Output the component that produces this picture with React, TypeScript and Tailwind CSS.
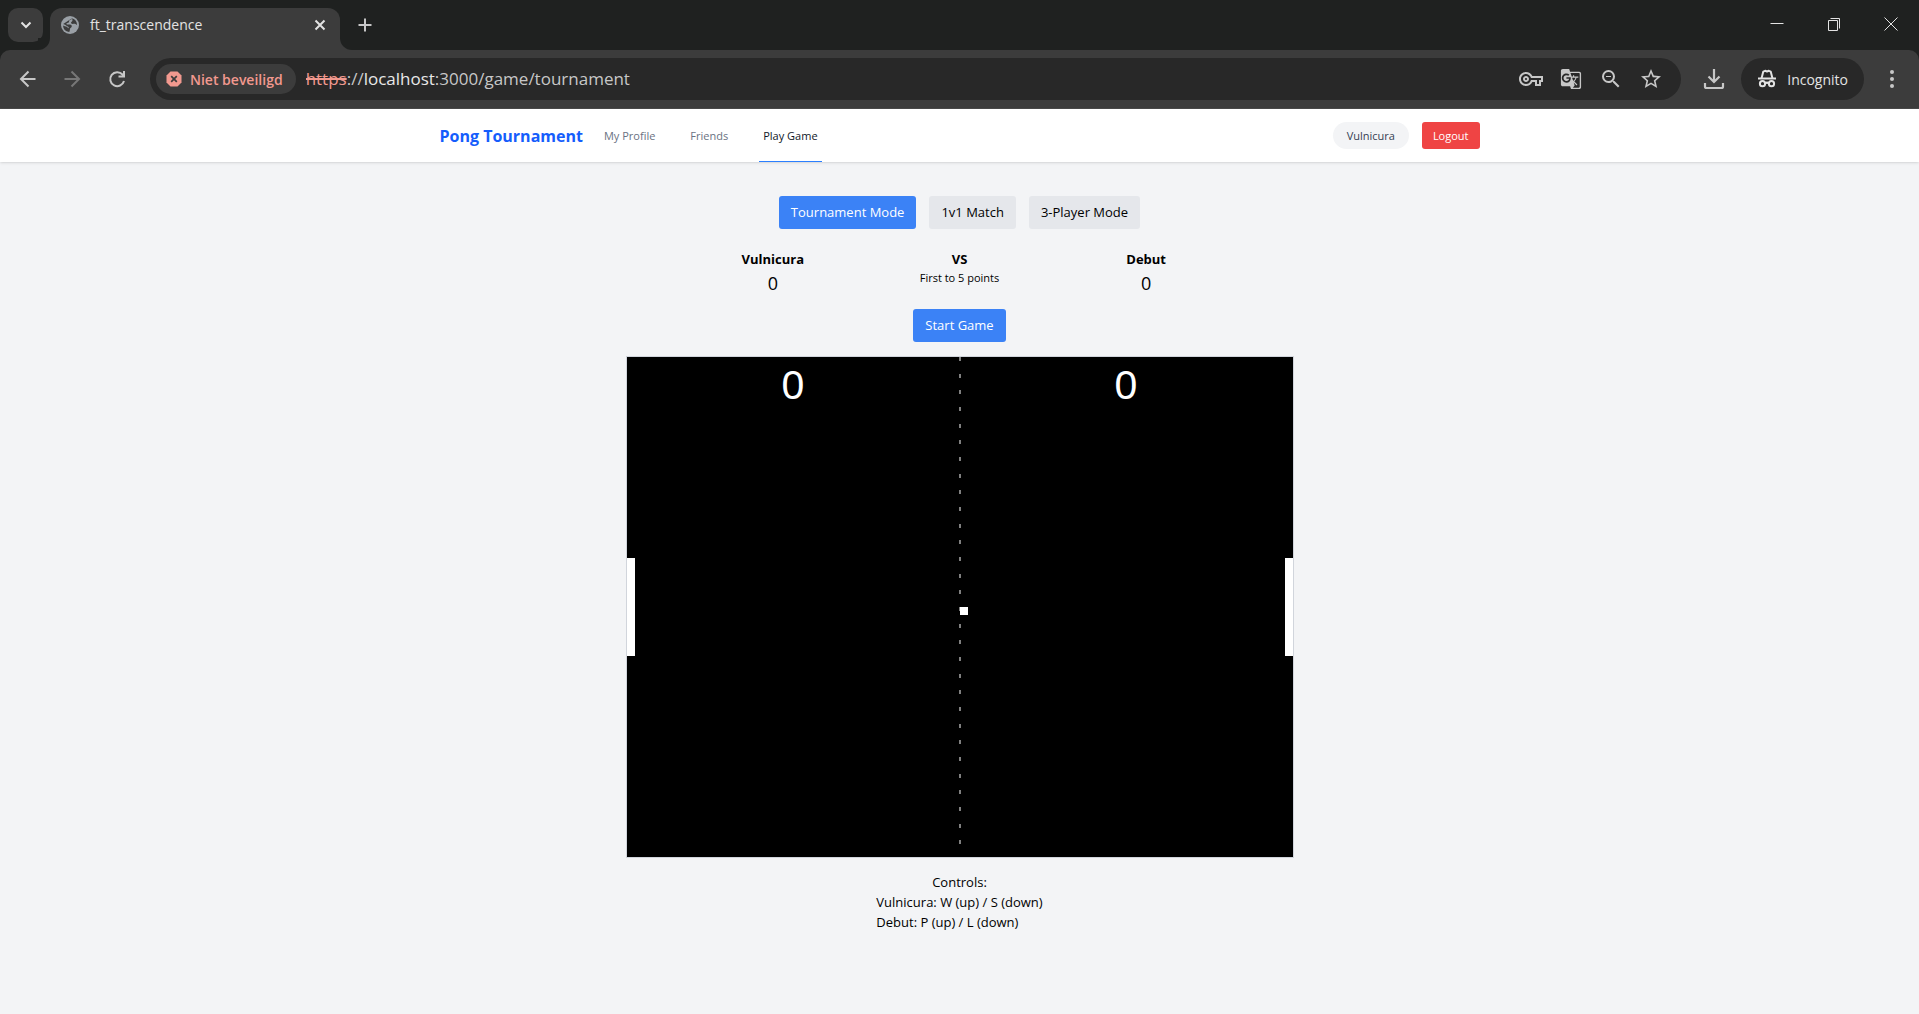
import type { ReactNode } from "react";
import { MdGTranslate, MdOutlineVpnKey, MdOutlineZoomOut, MdStarOutline } from "react-icons/md";

function Stroke({ d, size = 20, width = 2, className = "" }: { d: string; size?: number; width?: number; className?: string }) {
  return (
    <svg width={size} height={size} viewBox="0 0 20 20" fill="none" stroke="currentColor" strokeWidth={width} className={className} aria-hidden="true">
      <path d={d} />
    </svg>
  );
}

function IconButton({ label, className, children }: { label: string; className: string; children: ReactNode }) {
  return (
    <button type="button" aria-label={label} className={`flex shrink-0 items-center justify-center ${className}`}>
      {children}
    </button>
  );
}

function GlobeIcon() {
  return (
    <svg width="20" height="20" viewBox="0 0 20 20" className="mt-2 text-[#9aa0a6]" aria-hidden="true">
      <circle cx="10" cy="10" r="9" fill="currentColor" />
      <path
        d="M12 3.200c-.3 1.600-1.800 1.300-2.600 2.100-.6.700.1 1.500-.7 2.100-.8.600-2 .2-2.300 1.100-.2.900 1 1.100 2.200 1.100 1.700 0 3.200.2 3.200 1.700s-1.600 1.300-1.800 2.600c-.2 1.200-.2 2.200-.9 3.100A7 7 0 0 1 3 10.500c1.200.7 2.600.9 3.800 1.300.8.300.7 1.300 1.600 1.400l.4-.8c-.4-1-2.400-1.100-3-2.100-.6-1-2-.7-2.600-1.400"
        fill="#3c3c3c"
      />
      <path d="M12 3.200A7 7 0 0 1 17 10c-.9-.3-1.100-1.200-2.200-1.200-1.300 0-2.400.6-3.400-.2-.8-.7-.3-1.500.5-2.100.9-.7.600-1.800.1-3.300z" fill="#3c3c3c" />
    </svg>
  );
}

function IncognitoIcon() {
  return (
    <svg width="20" height="20" viewBox="0 0 20 20" fill="none" stroke="currentColor" strokeWidth="2" aria-hidden="true">
      <path d="M1 9.500h18" />
      <path d="M4.500 9.500 6.300 2.600l1.800-.8 1.900.7 1.900-.7 1.800.8 1.800 6.900" strokeLinejoin="round" />
      <circle cx="5.500" cy="14.700" r="2.600" />
      <circle cx="14.500" cy="14.700" r="2.600" />
      <path d="M8 14.300c1.200-.8 2.800-.8 4 0" />
    </svg>
  );
}

function TabStrip() {
  return (
    <div className="flex h-[50px] items-start bg-[#1f2120] text-[#e3e3e3]">
      <IconButton label="Search tabs" className="mt-2 ml-2 h-[34px] w-[35px] rounded-[10px] bg-[#3c3c3c]">
        <Stroke d="m5.500 7.500 4.500 4.500 4.500-4.500" />
      </IconButton>
      <div className="relative mt-2 ml-[7px] flex h-[42px] w-[290px] items-center rounded-t-[12px] bg-[#3c3c3c] pr-2 pb-4 pl-[10px]">
        <span className="absolute bottom-0 -left-3 size-3 bg-[#3c3c3c]">
          <span className="block size-3 rounded-br-[12px] bg-[#1f2120]" />
        </span>
        <span className="absolute -right-3 bottom-0 size-3 bg-[#3c3c3c]">
          <span className="block size-3 rounded-bl-[12px] bg-[#1f2120]" />
        </span>
        <GlobeIcon />
        <span className="mt-2 ml-[10px] flex-1 text-[14px] leading-5">ft_transcendence</span>
        <IconButton label="Close tab" className="mt-2 size-6">
          <Stroke d="m5.500 5.500 9 9m0-9-9 9" />
        </IconButton>
      </div>
      <IconButton label="New tab" className="mt-[13px] ml-[13px] size-6 text-[#c7c7c7]">
        <Stroke d="M10 3.500v13M3.500 10h13" />
      </IconButton>
      <div className="ml-auto flex pt-2">
        <IconButton label="Minimize" className="h-8 w-[57px]">
          <Stroke d="M3.500 9.500h13" width={1} />
        </IconButton>
        <IconButton label="Restore" className="h-8 w-[57px]">
          <Stroke d="M4.500 6.500h9v10h-9zM6.500 4.500h9v10" width={1} />
        </IconButton>
        <IconButton label="Close" className="h-8 w-[57px]">
          <Stroke d="m3.500 3.500 13 13m0-13-13 13" width={1} />
        </IconButton>
      </div>
    </div>
  );
}

function Toolbar() {
  return (
    <div className="bg-[#1f2120]">
      <div className="flex h-[59px] items-center rounded-t-[10px] border-b border-[#4a4a4a] bg-[#3c3c3c] text-[#c7c7c7]">
        <IconButton label="Back" className="ml-2 h-9 w-10">
          <Stroke d="M17.500 10H3m7.500-7.500L3 10l7.500 7.500" />
        </IconButton>
        <IconButton label="Forward" className="ml-1 h-9 w-10 text-[#777777]">
          <Stroke d="M2.500 10H17M9.500 2.500 17 10l-7.500 7.500" />
        </IconButton>
        <IconButton label="Reload" className="ml-[5px] h-9 w-10">
          <Stroke d="M17 12a7 7 0 1 1-1.500-6.500L17 7m0-5v5.500h-5.500" />
        </IconButton>
        <div className="ml-[13px] flex h-[42px] min-w-0 flex-1 items-center rounded-full bg-[#282828] pr-[18px] pl-[6px]">
          <button type="button" className="flex h-[30px] shrink-0 items-center gap-2 rounded-full bg-[#3c3c3c] pr-[13px] pl-[10px] text-[14px] font-semibold text-[#f2998f]">
            <svg width="16" height="16" viewBox="0 0 16 16" aria-hidden="true">
              <path d="M4.500.5h7l4 4v7l-4 4h-7l-4-4v-7z" fill="currentColor" />
              <path d="m5.200 5.200 5.600 5.600m0-5.600-5.600 5.600" stroke="#3c3c3c" strokeWidth="1.700" />
            </svg>
            Niet beveiligd
          </button>
          <div role="textbox" aria-label="Address" tabIndex={0} className="ml-[10px] min-w-0 flex-1 truncate text-[17px] leading-6">
            <span className="text-[#f2998f] line-through decoration-2">https</span>
            <span>://</span>
            <span className="text-[#e8e8e8]">localhost</span>
            <span>:3000/game/tournament</span>
          </div>
          <div className="flex gap-4">
            <IconButton label="Passwords" className="size-6">
              <MdOutlineVpnKey className="size-6" />
            </IconButton>
            <IconButton label="Translate" className="size-6">
              <MdGTranslate className="size-[22px]" />
            </IconButton>
            <IconButton label="Zoom" className="size-6">
              <MdOutlineZoomOut className="size-6" />
            </IconButton>
            <IconButton label="Bookmark" className="size-6">
              <MdStarOutline className="size-6" />
            </IconButton>
          </div>
        </div>
        <IconButton label="Downloads" className="ml-[21px] size-6">
          <svg width="22" height="22" viewBox="0 0 22 22" fill="none" stroke="currentColor" strokeWidth="2.200" aria-hidden="true">
            <path d="M11 1v13M5.500 8.500 11 14l5.500-5.500M2 15v3.500c0 .8.700 1.500 1.500 1.500h15c.8 0 1.500-.7 1.500-1.500V15" />
          </svg>
        </IconButton>
        <button type="button" className="ml-[15px] flex h-[42px] items-center gap-[10px] rounded-full bg-[#282828] px-4 text-[14px] text-[#e3e3e3]">
          <IncognitoIcon />
          Incognito
        </button>
        <IconButton label="Menu" className="mr-[15px] ml-4 size-6">
          <svg width="20" height="20" viewBox="0 0 20 20" fill="currentColor" aria-hidden="true">
            <circle cx="10" cy="3" r="2" />
            <circle cx="10" cy="10" r="2" />
            <circle cx="10" cy="17" r="2" />
          </svg>
        </IconButton>
      </div>
    </div>
  );
}

const links = [
  { label: "My Profile", active: false },
  { label: "Friends", active: false },
  { label: "Play Game", active: true },
];

function Navbar() {
  return (
    <nav className="bg-white shadow-sm">
      <div className="mx-auto flex h-[53px] max-w-[1066px] items-center px-[13px]">
        <a href="#home" className="text-[16px] font-bold text-blue-600">
          Pong Tournament
        </a>
        <div className="ml-[17px] flex gap-[27px] self-stretch">
          {links.map((link) => (
            <a
              key={link.label}
              href="#page"
              aria-current={link.active ? "page" : undefined}
              className={
                link.active
                  ? "flex items-center border-b border-blue-500 px-1 pt-[3px] text-[11px] font-medium text-gray-900"
                  : "flex items-center border-b border-transparent px-1 pt-[3px] text-[11px] font-medium text-gray-500"
              }
            >
              {link.label}
            </a>
          ))}
        </div>
        <div className="ml-auto flex items-center gap-[13px] text-[11px] leading-[17px] font-medium">
          <span className="rounded-full bg-gray-100 px-[14px] py-[5px] text-gray-700">Vulnicura</span>
          <button type="button" className="rounded-[3px] bg-[#ef4444] px-[11px] py-[5px] text-white">
            Logout
          </button>
        </div>
      </div>
    </nav>
  );
}

const button = "h-[33px] rounded-[3px] px-3 text-[13px]";

function Player({ name }: { name: string }) {
  return (
    <div>
      <h3 className="leading-5 font-bold">{name}</h3>
      <p className="text-[18px] leading-7">0</p>
    </div>
  );
}

function PongTable() {
  const dashes = Array.from({ length: 30 }, (_, i) => Math.round((i * 50) / 3));
  return (
    <svg viewBox="0 0 666 500" role="img" aria-label="Pong table" className="mt-[14px] box-content h-auto w-full max-w-[666px] border border-gray-300 bg-black">
      {dashes.map((y) => (
        <rect key={y} x="332" y={y} width="2" height="4" fill="#808080" />
      ))}
      <rect x="0" y="201" width="8" height="98" fill="#fff" />
      <rect x="658" y="201" width="8" height="98" fill="#fff" />
      <rect x="333" y="250" width="8" height="8" fill="#fff" />
      <text x="166" y="42" textAnchor="middle" fontSize="41" fill="#fff" fontFamily="Liberation Sans, sans-serif">0</text>
      <text x="499" y="42" textAnchor="middle" fontSize="41" fill="#fff" fontFamily="Liberation Sans, sans-serif">0</text>
    </svg>
  );
}

export default function App() {
  return (
    <div className="flex min-h-screen flex-col bg-gray-100 font-['Open_Sans','Noto_Sans',sans-serif] text-black">
      <header>
        <TabStrip />
        <Toolbar />
      </header>
      <Navbar />
      <main className="flex flex-1 flex-col items-center pt-[34px] pb-10 text-[13px]">
        <div className="flex gap-[13px]">
          <button type="button" className={`${button} bg-[#3b82f6] text-white`}>Tournament Mode</button>
          <button type="button" className={`${button} bg-gray-200`}>1v1 Match</button>
          <button type="button" className={`${button} bg-gray-200`}>3-Player Mode</button>
        </div>
        <div className="mt-5 grid w-full max-w-[560px] grid-cols-3 text-center">
          <Player name="Vulnicura" />
          <div>
            <h3 className="leading-5 font-bold">VS</h3>
            <p className="text-[11px] leading-[17px]">First to 5 points</p>
          </div>
          <Player name="Debut" />
        </div>
        <button type="button" className={`${button} mt-3 bg-[#3b82f6] text-white`}>Start Game</button>
        <PongTable />
        <div className="mt-[14px] leading-5">
          <p className="text-center">Controls:</p>
          <p>Vulnicura: W (up) / S (down)</p>
          <p>Debut: P (up) / L (down)</p>
        </div>
      </main>
    </div>
  );
}
